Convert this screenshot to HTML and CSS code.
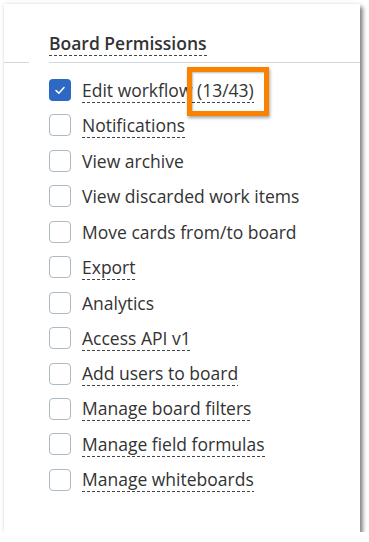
FILE: index.html
```html
<!DOCTYPE html>
<html>
<head>
<meta charset="utf-8">
<link rel="stylesheet" href="styles.css">
</head>
<body>
<div class="panel">
  <div class="header"><span class="dash title">Board Permissions</span></div>
  <div class="rule"></div>
  <ul class="list">
    <li class="row"><span class="box checked"><svg viewBox="0 0 22 22" width="22" height="22"><polyline points="7,11.5 9.8,14.2 15,8.5" fill="none" stroke="#fff" stroke-width="1.6" stroke-linecap="round" stroke-linejoin="round"/></svg></span><span class="dash">Edit workflow (13/43)</span></li>
    <li class="row"><span class="box"></span><span class="dash">Notifications</span></li>
    <li class="row"><span class="box"></span><span>View archive</span></li>
    <li class="row"><span class="box"></span><span>View discarded work items</span></li>
    <li class="row"><span class="box"></span><span>Move cards from/to board</span></li>
    <li class="row"><span class="box"></span><span class="dash">Export</span></li>
    <li class="row"><span class="box"></span><span>Analytics</span></li>
    <li class="row"><span class="box"></span><span class="dash">Access API v1</span></li>
    <li class="row"><span class="box"></span><span class="dash">Add users to board</span></li>
    <li class="row"><span class="box"></span><span class="dash">Manage board filters</span></li>
    <li class="row"><span class="box"></span><span class="dash">Manage field formulas</span></li>
    <li class="row"><span class="box"></span><span class="dash">Manage whiteboards</span></li>
  </ul>
  <div class="highlight"></div>
</div>
</body>
</html>
```
FILE: styles.css
```css
html, body {
  margin: 0;
  padding: 0;
  background: #ffffff;
}
body {
  font-family: "Open Sans", "Noto Sans", sans-serif;
  color: #333333;
}
.panel {
  position: relative;
  box-sizing: border-box;
  margin: 4px 0 0 4px;
  width: 356px;
  height: 528px;
  background: #ffffff;
  box-shadow: 3px 3px 4px rgba(0, 0, 0, 0.45), 0 0 4px rgba(0, 0, 0, 0.12);
}
.header {
  padding: 27px 0 0 45px;
  height: 31px;
  font-size: 17.5px;
  line-height: 24px;
  font-weight: 600;
  color: #333;
}
.rule {
  height: 1px;
  background: linear-gradient(to right, #cfd8dc 0 25px, transparent 25px 45px, #cfd8dc 45px);
}
.dash {
  padding-bottom: 1px;
  background: linear-gradient(to right, #444 60%, transparent 60%) left bottom / 5px 1px repeat-x;
}
.list {
  list-style: none;
  margin: 0;
  padding: 9.3px 0 0 45px;
}
.row {
  display: flex;
  align-items: center;
  gap: 11px;
  height: 35.45px;
  font-size: 17.5px;
  line-height: 24px;
  color: #333;
}
.box {
  box-sizing: border-box;
  flex: none;
  width: 22px;
  height: 22px;
  border: 1px solid #adbac3;
  border-radius: 4px;
  background: #fff;
  display: block;
}
.box.checked {
  border: none;
  background: #2c68c4;
}
.box svg {
  display: block;
}
.highlight {
  position: absolute;
  left: 183px;
  top: 63px;
  width: 82px;
  height: 49px;
  box-sizing: border-box;
  border: 5px solid #f98200;
  box-shadow: 1px 2px 3px rgba(0, 0, 0, 0.35), inset 1px 1px 2px rgba(0, 0, 0, 0.25);
}
```
